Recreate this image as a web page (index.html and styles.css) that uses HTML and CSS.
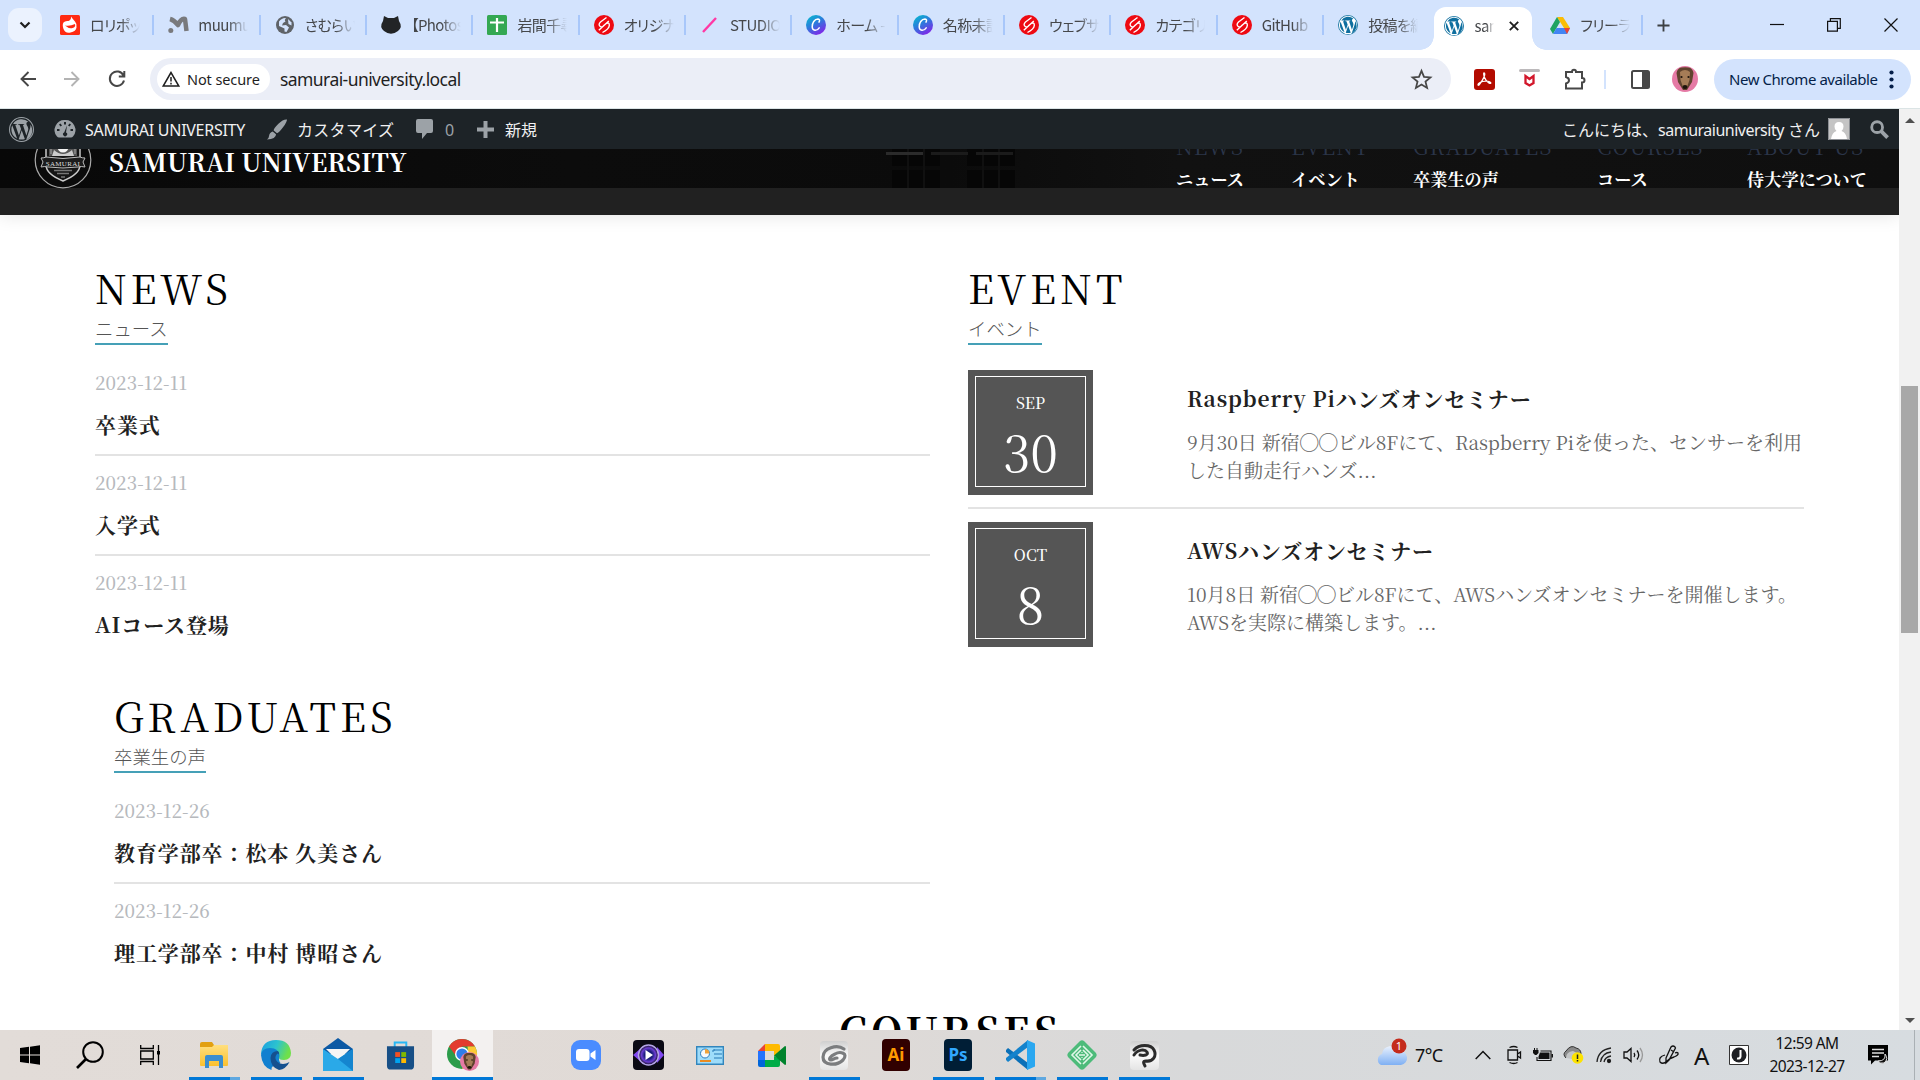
FILE: index.html
```html
<!DOCTYPE html>
<html lang="ja">
<head>
<meta charset="utf-8">
<title>SAMURAI UNIVERSITY</title>
<link rel="stylesheet" href="styles.css">
</head>
<body>
<svg class="defs" width="0" height="0">
  <defs>
    <linearGradient id="canvaGrad" x1="0" y1="0" x2=".6" y2="1"><stop offset="0" stop-color="#00c4cc"/><stop offset=".5" stop-color="#2a7ddc"/><stop offset="1" stop-color="#7d2ae8"/></linearGradient>
    <linearGradient id="edgeGrad" x1="0" y1="0" x2="1" y2=".3"><stop offset="0" stop-color="#1b9de2"/><stop offset=".55" stop-color="#2cc3cf"/><stop offset="1" stop-color="#6fe04a"/></linearGradient>
    <linearGradient id="cloudGrad" x1="0" y1="0" x2="0" y2="1"><stop offset="0" stop-color="#e9f1fd"/><stop offset="1" stop-color="#7fb0f3"/></linearGradient>
    <linearGradient id="silver" x1="0" y1="0" x2="0" y2="1"><stop offset="0" stop-color="#cfcfcf"/><stop offset=".5" stop-color="#fafafa"/><stop offset="1" stop-color="#e4e4e4"/></linearGradient>
    <linearGradient id="folder" x1="0" y1="0" x2="0" y2="1"><stop offset="0" stop-color="#ffdf7e"/><stop offset="1" stop-color="#fbc02f"/></linearGradient>
    <radialGradient id="playGrad"><stop offset=".4" stop-color="#1b1c7a"/><stop offset=".7" stop-color="#6c3ed2"/><stop offset="1" stop-color="#0a0812"/></radialGradient>
  </defs>
  <symbol id="sam" viewBox="0 0 20 20"><circle cx="10" cy="10" r="10" fill="#ee0a12"/><path d="M12.500 2.500 6.500 7Q4 9.500 6 11.200T9.500 10.800L12.500 8.300Q15.500 7 15.300 10.500T8.500 17.500M4.800 15.200 14.800 6" fill="none" stroke="#fff" stroke-width="1.400"/></symbol>
  <symbol id="canva" viewBox="0 0 20 20"><circle cx="10" cy="10" r="10" fill="url(#canvaGrad)"/><path d="M13 7.200q1.500-3-1-3.200C8.500 4 6 8 6.200 12s4.500 4.500 7 .8" fill="none" stroke="#fff" stroke-width="1.500" stroke-linecap="round"/></symbol>
  <symbol id="wp" viewBox="0 0 24 24"><path fill="currentColor" d="M12 0a12 12 0 1 0 0 24 12 12 0 0 0 0-24zm0 1a11 11 0 1 1 0 22 11 11 0 0 1 0-22zM2.300 12c0 3.800 2.200 7.100 5.500 8.700L3.100 8a9.600 9.600 0 0 0-.8 4zm16.200-.5c0-1.200-.4-2-.8-2.700-.5-.8-1-1.500-1-2.400 0-.9.700-1.800 1.700-1.800h.2A9.700 9.700 0 0 0 3.900 6.700h.6c1 0 2.600-.1 2.600-.1.500 0 .6.700 0 .8 0 0-.5.100-1.100.1l3.500 10.300 2.100-6.200-1.500-4.100-1-.1c-.5 0-.5-.8 0-.8 0 0 1.600.1 2.600.1s2.600-.1 2.600-.1c.5 0 .6.700.1.800l-1.100.1 3.400 10.200 1-3.100c.4-1.300.8-2.300.8-3.100zm-6.300 1.300-2.900 8.500c1.900.6 4.100.5 6-.1l-.1-.2-3-8.200zm8.300-5.500c.3 2.300-.3 4-1.100 6l-2.900 8.500A9.700 9.700 0 0 0 20.500 7.300z"/></symbol>
  <symbol id="dog" viewBox="0 0 26 26"><circle cx="13" cy="13" r="13" fill="#e57aa5"/><path d="M4.500 7q1-5 5-5.500t7 0q4 .5 5 5.500l-1.500 9-5 8h-4L6 16z" fill="#5f432e"/><path d="M8 6q5-4 10 0l-.5 8-2.500 7h-4l-2.500-7z" fill="#a57c57"/><circle cx="9.500" cy="11" r="1.100" fill="#1d130c"/><circle cx="16.500" cy="11" r="1.100" fill="#1d130c"/><ellipse cx="13" cy="21" rx="2.500" ry="2" fill="#1d130c"/></symbol>
</svg>

<div class="screen">
  <div class="tabstrip">
    <div class="tab-search"><svg width="12" height="8" viewBox="0 0 12 8"><path d="m1.500 1.500 4.500 4.500 4.500-4.500" fill="none" stroke="#1f1f1f" stroke-width="2.200"/></svg></div>
    <div class="tab tab-first"><svg class="fav" viewBox="0 0 20 20"><rect width="20" height="20" rx="1.500" fill="#ff2a12"/><path d="M11 1.500q2 3 4 5t1.500 6-6 5-7-3.500 0-6.500 5-1.500q3-1.500 2.500-4.500z" fill="#fff"/><path d="M5 10.500q5 1 10-1.500 1 3-2.500 4T5 10.500z" fill="#ff2a12"/></svg><span class="label">ロリポップ</span></div>
    <div class="tab"><svg class="fav" viewBox="0 0 20 20"><path d="M2 4q4 1 8 6 3-7 7-6l1.500 12" fill="none" stroke="#797a7d" stroke-width="4.500" stroke-linejoin="round"/><circle cx="2.800" cy="15.500" r="2.500" fill="#797a7d"/></svg><span class="label">muumuu</span></div>
    <div class="tab"><svg class="fav" viewBox="0 0 20 20"><circle cx="10" cy="10" r="9" fill="#5f6368"/><path d="M4 6.500Q7 2.500 11 3q-2 2-.5 3.500L8 8l-1 2.500 4-.5 3 2.500-2.500 4.500-2-.5v-3L4 11z" fill="#d3e3fd"/><path d="m13 4 3.500 3.500v3L13.500 9z" fill="#d3e3fd"/></svg><span class="label">さむらい大</span></div>
    <div class="tab"><svg class="fav" viewBox="0 0 20 20"><path d="M3 1l4 2h6l4-2 1 5q4 6-1 10-7 5.500-14 0-5-4-1-10z" fill="#222426"/></svg><span class="label">【Photosh</span></div>
    <div class="tab"><svg class="fav" viewBox="0 0 20 20"><rect width="20" height="20" rx="1.500" fill="#34a853"/><path d="M3 7.500h14M10 3v14" stroke="#fff" stroke-width="2.200"/></svg><span class="label">岩間千尋</span></div>
    <div class="tab"><svg class="fav"><use href="#sam"/></svg><span class="label">オリジナル</span></div>
    <div class="tab"><svg class="fav" viewBox="0 0 20 20"><path d="m3 17 13-14" stroke="#ff38a4" stroke-width="2.400"/></svg><span class="label">STUDIO</span></div>
    <div class="tab"><svg class="fav"><use href="#canva"/></svg><span class="label">ホーム -</span></div>
    <div class="tab"><svg class="fav"><use href="#canva"/></svg><span class="label">名称未設</span></div>
    <div class="tab"><svg class="fav"><use href="#sam"/></svg><span class="label">ウェブサイ</span></div>
    <div class="tab"><svg class="fav"><use href="#sam"/></svg><span class="label">カテゴリー</span></div>
    <div class="tab"><svg class="fav"><use href="#sam"/></svg><span class="label">GitHub</span></div>
    <div class="tab tab-plain"><svg class="fav wp-blue"><use href="#wp"/></svg><span class="label">投稿を編</span></div>
    <div class="tab tab-active"><svg class="fav wp-blue"><use href="#wp"/></svg><span class="label">sam</span><svg class="tab-x" viewBox="0 0 10 10"><path d="m.8.8 8.400 8.400M9.200.8.8 9.200" stroke="#1f1f1f" stroke-width="1.900"/></svg></div>
    <div class="tab"><svg class="fav" viewBox="0 0 20 20"><path d="M7 2h6l7 11h-6z" fill="#fbbc04"/><path d="M7 2 0 14l3 5 7-12z" fill="#1ea362"/><path d="M3 19h14l3-6H6.500z" fill="#4285f4"/><path d="m17 19 3-6h-6z" fill="#ea4335"/></svg><span class="label">フリーラン</span></div>
    <svg class="tab-new" viewBox="0 0 14 14"><path d="M7 .5v13M.5 7h13" stroke="#3c4043" stroke-width="2"/></svg>
    <div class="window-buttons">
      <svg width="14" height="14"><path d="M0 6.500h14" stroke="#111" stroke-width="1.200"/></svg>
      <svg width="14" height="14"><path d="M.6 3.400h9.800v9.800H.6zM3.400 3.400V.6h9.900v9.800h-2.900" fill="none" stroke="#111" stroke-width="1.200"/></svg>
      <svg width="14" height="14"><path d="m.5.5 13 13m0-13-13 13" stroke="#111" stroke-width="1.200"/></svg>
    </div>
  </div>

  <div class="toolbar">
    <div class="nav-buttons">
      <svg width="16" height="16"><path d="M16 8H1.800M8.500 1 1.500 8l7 7" fill="none" stroke="#474747" stroke-width="1.900"/></svg>
      <svg width="16" height="16"><path d="M0 8h14.200M7.500 1l7 7-7 7" fill="none" stroke="#b3b3b3" stroke-width="1.900"/></svg>
      <svg width="18" height="18"><path d="M15.500 5.500A7.200 7.200 0 1 0 16 10.500M16.300 1v5.500h-5.500" fill="none" stroke="#474747" stroke-width="2"/></svg>
    </div>
    <div class="omnibox">
      <div class="chip"><svg width="18" height="16" viewBox="0 0 18 16"><path d="M9 1.500 1.200 15h15.600zM9 6v4.500M9 11.800v1.700" fill="none" stroke="#1f1f1f" stroke-width="1.500"/></svg><span>Not secure</span></div>
      <span class="url">samurai-university.local</span>
      <svg class="star" viewBox="0 0 20 20"><path d="m10 1.800 2.400 5.700 6.100.5-4.700 4 1.500 6-5.300-3.300L4.700 18l1.500-6-4.700-4 6.100-.5z" fill="none" stroke="#474747" stroke-width="1.700"/></svg>
    </div>
    <div class="extensions">
      <svg width="21" height="21" viewBox="0 0 21 21"><rect width="21" height="21" rx="3" fill="#b30b00"/><path d="M10 4c2 0 0 6-5 12-1 1-2-1 1-2.500 3-1.500 9-2 10.500 0s-4 .5-6-5C9.600 6 9.500 4 10 4z" fill="none" stroke="#fff" stroke-width="1.300"/></svg>
      <svg width="21" height="21" viewBox="0 0 21 21"><rect width="21" height="3" rx="1.500" fill="#bcb9bb"/><path d="M6.500 7v7l4 2.500 4-2.500V7l-4 3z" fill="none" stroke="#d2172b" stroke-width="2.300"/></svg>
      <svg width="22" height="21" viewBox="0 0 22 21"><path d="M2 3h6q0-2.200 2-2.200T12 3h6v6q2.500 0 2.500 2.200T18 13.400V19.500H2v-5q3-1 3-3.300T2 8z" fill="none" stroke="#474747" stroke-width="2"/></svg>
      <i class="tool-sep"></i>
      <svg width="19" height="19"><rect x="1" y="1" width="17" height="17" rx="1.500" fill="none" stroke="#474747" stroke-width="2"/><path d="M11 1h7v17h-7z" fill="#474747"/></svg>
      <svg class="profile" width="26" height="26"><use href="#dog"/></svg>
    </div>
    <div class="update"><span>New Chrome available</span><svg width="5" height="19" fill="#041e49"><circle cx="2.500" cy="2.500" r="2.100"/><circle cx="2.500" cy="9.500" r="2.100"/><circle cx="2.500" cy="16.500" r="2.100"/></svg></div>
  </div>

  <div class="viewport">
    <div class="page">
      <div class="adminbar">
        <svg class="ab-wp" viewBox="0 0 24 24"><use href="#wp"/></svg>
        <svg class="ab-dash" viewBox="0 0 20 18"><path fill="currentColor" fill-rule="evenodd" d="M10 0a10 10 0 0 0-8 16.500q.8 1 2 1h12q1.200 0 2-1A10 10 0 0 0 10 0zM9 2h2v2.500H9zM4 4.500l1.500-1L7 5.500 5.500 6.500zM2 9h2.500v2H2zm13.500 0H18v2h-2.500zM12 5.500l-1 7a2 2 0 1 1-1.800 0zM14.500 3.500l1.500 1-1.500 2L13 5.500z"/></svg>
        <span class="ab-site">SAMURAI UNIVERSITY</span>
        <svg class="ab-brush" viewBox="0 0 22 22"><path fill="currentColor" d="M21.500.5q-4-.5-9 4.500t-5 7l3.500 3q2.500-1 6.500-6.500t4-8zM6.500 13l3.500 3q0 5-9.500 5.500 2-1 2.200-4t3.800-4.500z"/></svg>
        <span class="ab-custom">カスタマイズ</span>
        <svg class="ab-comment" viewBox="0 0 17 20"><path fill="currentColor" d="M2 0h13q2 0 2 2v10q0 2-2 2h-4l-5 6v-6H2q-2 0-2-2V2q0-2 2-2z"/></svg>
        <span class="ab-count">0</span>
        <svg class="ab-plus" viewBox="0 0 17 17"><path d="M8.500 0v17M0 8.500h17" stroke="currentColor" stroke-width="4"/></svg>
        <span class="ab-new">新規</span>
        <span class="ab-hello">こんにちは、<b>samuraiuniversity</b> さん</span>
        <svg class="ab-avatar" viewBox="0 0 22 22"><path d="M0 0h22v22H0z" fill="#c4c4c4"/><path d="M11 4q4.500 0 4.500 4.500 0 3-2 4.500 4.500 1.500 5.500 8H3q1-6.500 5.500-8-2-1.500-2-4.500Q6.500 4 11 4z" fill="#fff"/><path d="M.5.500h21v21H.5z" fill="none" stroke="#8c8f94"/></svg>
        <svg class="ab-search" viewBox="0 0 20 20"><circle cx="7.500" cy="7.500" r="5.700" fill="none" stroke="currentColor" stroke-width="3"/><path d="m12 12 6.500 6.500" stroke="currentColor" stroke-width="4"/></svg>
      </div>

      <header class="site-header">
        <div class="hero-edge">
          <svg class="windows" viewBox="0 0 160 39"><path d="M10 0h48v17H10zm0 21h48v18H10zm75-21h48v17H85zm0 21h48v18H85z" fill="#060606"/><path d="M26 0v39m16-39v39m59-39v39m16-39v39" stroke="#101010" stroke-width="2"/></svg>
          <div class="slides"><i class="on"></i><i></i><i></i></div>
        </div>
        <div class="header-row">
          <svg class="crest" viewBox="0 0 58 58"><circle cx="29" cy="29" r="27.800" fill="#0b0b0b" stroke="#aaa" stroke-width="1.200"/><path d="M12 6h34v28q0 9-17 16-17-7-17-16z" fill="#151515" stroke="#c9c9c9" stroke-width="1.500"/><path d="M15 7h28v18H15z" fill="#555"/><circle cx="29" cy="16" r="5.500" fill="#f4f4f4"/><path d="M20 19q9 8 18 0l2 6H18z" fill="#ccc"/><path d="M17 7v16m3-16v9m18-9v9m3-9v16" stroke="#aaa"/><path d="M7 27q3 0 5-1 17 3 34 0 2 1 5 1l-2 4 2 5q-4-1-7 0-15 2-30 0-3-1-7 0l2-5z" fill="#1c1c1c" stroke="#bbb"/><path d="M20 39.500h18M23 42.500h12M27 46h4" stroke="#777" stroke-width="1.300"/><text x="29" y="34.500" text-anchor="middle">SAMURAI</text></svg>
          <span class="brand">SAMURAI UNIVERSITY</span>
          <nav class="menu">
            <a class="m1"><em>NEWS</em>ニュース</a>
            <a class="m2"><em>EVENT</em>イベント</a>
            <a class="m3"><em>GRADUATES</em>卒業生の声</a>
            <a class="m4"><em>COURSES</em>コース</a>
            <a class="m5"><em>ABOUT US</em>侍大学について</a>
          </nav>
        </div>
      </header>

      <main class="columns">
        <div class="left">
          <section class="news">
            <h2>NEWS</h2>
            <div class="sub">ニュース</div>
            <article><time>2023-12-11</time><h3>卒業式</h3></article>
            <article><time>2023-12-11</time><h3>入学式</h3></article>
            <article><time>2023-12-11</time><h3>AIコース登場</h3></article>
          </section>
          <section class="news graduates">
            <h2>GRADUATES</h2>
            <div class="sub">卒業生の声</div>
            <article><time>2023-12-26</time><h3>教育学部卒：松本 久美さん</h3></article>
            <article><time>2023-12-26</time><h3>理工学部卒：中村 博昭さん</h3></article>
          </section>
        </div>
        <section class="events">
          <h2>EVENT</h2>
          <div class="sub">イベント</div>
          <article class="event">
            <div class="date"><div><small>SEP</small><strong>30</strong></div></div>
            <div class="info"><h3>Raspberry Piハンズオンセミナー</h3><p><span>9月30日 新宿◯◯ビル8Fにて、Raspberry Piを使った、センサーを利用</span><br><span>した自動走行ハンズ<b>…</b></span></p></div>
          </article>
          <article class="event">
            <div class="date"><div><small>OCT</small><strong>8</strong></div></div>
            <div class="info"><h3>AWSハンズオンセミナー</h3><p><span>10月8日 新宿◯◯ビル8Fにて、AWSハンズオンセミナーを開催します。</span><br><span>AWSを実際に構築します。<b>…</b></span></p></div>
          </article>
        </section>
      </main>
      <h2 class="courses">COURSES</h2>
    </div>
    <div class="scrollbar"><i class="up"></i><div class="thumb"></div><i class="down"></i></div>
  </div>

  <div class="taskbar">
    <div class="cell c-start"><svg width="20" height="20"><path d="M0 3 9 1.800V9.500H0zM10 1.700 20 .2v9.300H10zM0 10.500h9v7.700L0 17zM10 10.500h10v9.300L10 18.300z"/></svg></div>
    <div class="cell c-search"><svg width="28" height="28" fill="none" stroke="#000"><circle cx="17" cy="11" r="9.800" stroke-width="2"/><path d="m10 18-9 9" stroke-width="2.600"/></svg></div>
    <div class="cell c-view"><svg width="20" height="20" fill="none" stroke="#000" stroke-width="1.300"><path d="M.7 0v3.500h12.600V0M.7 6h12.600v8H.7zM.7 20v-3.500h12.600V20M18.500 0v20"/><path d="M18.500 6v3.500" stroke-width="3"/></svg></div>
    <div class="cell run two"><svg width="28" height="26" viewBox="0 0 28 26"><path d="M0 2q0-2 2-2h10l2 3v5H0z" fill="#e2a011"/><path d="M0 5h12l2-2h14v20q0 1-1 1H1q-1 0-1-1z" fill="url(#folder)"/><path d="M5 26V15q0-2 2-2h14q2 0 2 2v11h-4v-7H9v7z" fill="#3b8ed0"/></svg></div>
    <div class="cell run"><svg width="30" height="30" viewBox="0 0 30 30"><path d="M0 14Q1 0 15 0t15 13q0 7-7 7-6 0-5-3z" fill="url(#edgeGrad)"/><path d="M0 15Q1 8 9 8q9 0 9.500 8-1.500 4 1 7-10 2-9 7Q1 27 0 15z" fill="#1180d0"/><path d="M17 11q-7 0-7.500 7 0 9 8.500 12 7-1 10.500-8-7 4-12 0-4-4-.5-8 1.500-1.500 2 1 .500-2.500-1-4z" fill="#15508f"/></svg></div>
    <div class="cell run"><svg width="30" height="34" viewBox="0 0 30 34"><path d="M0 11 15 0l15 11v5H0z" fill="#0c59a4"/><path d="M3 11h24L15 23z" fill="#f5f5f5"/><path d="M0 11l15 10 15-10v22H0z" fill="#2aa9e8"/><path d="m15 21 15 12V11z" fill="#1585cf"/></svg></div>
    <div class="cell"><svg width="29" height="30" viewBox="0 0 30 30"><path d="M9 7V2h12v5" fill="none" stroke="#27b8f5" stroke-width="2"/><path d="M1 6h28v20q0 4-4 4H5q-4 0-4-4z" fill="#174f86"/><path d="M9.500 12h5v5h-5z" fill="#f25022"/><path d="M15.800 12h5v5h-5z" fill="#7fba00"/><path d="M9.500 18.300h5v5h-5z" fill="#00a4ef"/><path d="M15.800 18.300h5v5h-5z" fill="#ffb900"/></svg></div>
    <div class="cell run active"><svg width="32" height="32" viewBox="0 0 32 32"><circle cx="15" cy="15" r="15" fill="#2b9c4a"/><path d="M2 7.500A15 15 0 0 1 28 7.500H15L9 17z" fill="#e33b2e"/><path d="M28 7.500A15 15 0 0 1 15 30l6.500-12-1-10.500z" fill="#fcc934"/><circle cx="15" cy="15" r="7" fill="#fff"/><circle cx="15" cy="15" r="5.600" fill="#2f7de9"/><svg x="13" y="13" width="19" height="19"><use href="#dog"/></svg></svg></div>
    <div class="cell"></div>
    <div class="cell"><svg width="30" height="30"><rect width="30" height="30" rx="9" fill="#4a8cff"/><rect x="5" y="9" width="13.500" height="12" rx="3" fill="#fff"/><path d="m19.500 13.500 5-3.500v10l-5-3.500z" fill="#fff"/></svg></div>
    <div class="cell"><svg width="31" height="30"><rect width="31" height="30" rx="4" fill="#0b0a14"/><path d="m0 15 7-6v12zm31 0-7-8v16z" fill="#8048f0"/><circle cx="15.500" cy="15" r="10" fill="url(#playGrad)" stroke="#b5a5e8" stroke-width="1.500"/><path d="m12.500 10 7.500 5-7.500 5z" fill="#fff"/></svg></div>
    <div class="cell"><svg width="28" height="19"><path d="M.7.700h26.600v17.600H.7z" fill="#9edcfa" stroke="#3286bd" stroke-width="1.400"/><circle cx="9" cy="7.500" r="4.500" fill="#f7f9fb" stroke="#2a7dc1"/><path d="M9 7.500V3a4.500 4.500 0 0 1 4.500 4.500z" fill="#f1a33a"/><path d="M16 5h2V3m0 5h8m-8-4h8m-8 8h8" stroke="#2678b5" fill="none"/><path d="M4 15h11" stroke="#e98b22" stroke-width="2"/></svg></div>
    <div class="cell"><svg width="28" height="23" viewBox="0 0 28 23"><path d="M0 7 7 0v7z" fill="#ea4335"/><path d="M0 7h7v9H0z" fill="#2573fc"/><path d="M7 0h13q2 0 2 2v6l-6 4V7H7z" fill="#ffba00"/><path d="M0 16h7v7H2q-2 0-2-2z" fill="#0066da"/><path d="M7 16h9v-4l6 3v6q0 2-2 2H7z" fill="#00ac47"/><path d="M16 11.500 27 2q1 0 1 1v17q0 1-1 1z" fill="#00832d"/></svg></div>
    <div class="cell run"><svg width="28" height="29"><rect width="28" height="29" rx="4" fill="url(#silver)"/><path d="M24 8C17 3 3 7 3 16c0 9 14 9 20 3 6-7-3-9-8-6-5 2-7 6-4 6 2 0 3-2 6-2" fill="none" stroke="#7b7d7f" stroke-width="3.200" stroke-linecap="round"/></svg></div>
    <div class="cell"><div class="adobe ai">Ai</div></div>
    <div class="cell run"><div class="adobe ps">Ps</div></div>
    <div class="cell run two"><svg width="30" height="30" viewBox="0 0 30 30"><path d="m1 10 2-2L23 23v7L1 12z" fill="#0a70b8"/><path d="m1 20 2 2L23 7V0L1 18z" fill="#1382cc"/><path d="m22 0 8 3.500v23L22 30z" fill="#2aa7f0"/></svg></div>
    <div class="cell run"><svg width="30" height="30"><path d="M13 1q2-1.500 4 0l12 12q1.500 2 0 4L17 29q-2 1.500-4 0L1 17q-1.500-2 0-4z" fill="#4dbb7a"/><path d="M14 6 5 15l9 9M16 6l9 9-9 9M14 10l-5 5 5 5m2-10 5 5-5 5M12 15h6M15 12v.8m0 4.200v.8" fill="none" stroke="#e0f7e8" stroke-width="1.600"/></svg></div>
    <div class="cell run"><svg width="29" height="29"><rect width="29" height="29" rx="4" fill="url(#silver)"/><path d="M4 9C9 3 21 3 24 9s-1 12-8 11c-4 0-2 3-1 5M4 14c4-6 11-6 13-3s-3 4-7 3" fill="none" stroke="#2b2b2b" stroke-width="3" stroke-linecap="round"/></svg></div>

    <div class="tray">
      <svg class="weather" width="32" height="28" viewBox="0 0 32 28"><path d="M5 27a6 6 0 0 1 1-11 9 9 0 0 1 17-3 7 7 0 0 1 2 14z" fill="url(#cloudGrad)"/><circle cx="23" cy="8" r="7.500" fill="#c42b1c"/><text x="23" y="12" text-anchor="middle">1</text></svg>
      <span class="temp">7°C</span>
      <svg class="chev" width="16" height="10"><path d="m.7 9 7.300-7.500L15.300 9" fill="none" stroke="#111" stroke-width="1.500"/></svg>
      <svg class="cam" width="15" height="18"><path d="M2.500 1.500q4.500-2 8 0M2.500 16.500q4.500 2 8 0M1 4h9.500v10H1zM10.500 8l3-2v6l-3-2" fill="none" stroke="#111" stroke-width="1.300"/></svg>
      <svg class="bat" width="20" height="14"><path d="M7.500 3h10.500v9.500H4V9" fill="none" stroke="#111" stroke-width="1.100"/><path d="M7 4.500h9.500V11H5.500V8.500zM18.500 6H20v3.500h-1.500zM0 2h5.500v3l-2 2h-1.500l-2-2zM1 0h1v2H1zm2.500 0h1v2h-1z" fill="#111"/></svg>
      <svg class="od" width="21" height="18"><path d="M3 12Q-1 8 3 5q5-7 10-3 5 1 5 6" fill="#8a8a8a" stroke="#333"/><path d="M3 12q0-6 7-7l4 2-5 6z" fill="#c3c5c6"/><circle cx="14.500" cy="12" r="5.800" fill="#fde300"/><path d="M14.500 8.500v4.500m0 1v1.500" stroke="#222" stroke-width="1.500"/></svg>
      <svg class="wifi" width="16" height="16" fill="none" stroke="#222" stroke-width="1.300"><path d="M1 15Q2 3 15 1M4.500 15Q6 6 15 5M8 15q1-5 7-6"/><circle cx="13" cy="14" r="1.500" fill="#111"/></svg>
      <svg class="spk" width="21" height="16" fill="none" stroke="#111" stroke-width="1.300"><path d="M1 5h3l4-3.500v13L4 11H1zM11 6q1.500 2 0 4M14 3.500q3.500 4.500 0 9"/><path d="M17 1q5 7 0 14" stroke="#999"/></svg>
      <svg class="pen" width="20" height="20" fill="none" stroke="#111" stroke-width="1.300"><path d="m7 13 5-11q2-2 4 0 1 1 0 2l-6 11-3 3zM6 10q-7 2-5 7 3 3 7-1 3-3 7-4 5-2 4-4-1-1-3 0M12 5l3 2"/></svg>
      <span class="ime">A</span>
      <svg class="jic" width="20" height="20"><path d="M.5.500h19v19H.5z" fill="#fff" stroke="#333"/><circle cx="10" cy="10" r="7.500" fill="#1f2024"/><path d="M11.500 5v6.500Q11 14 8 13.500" fill="none" stroke="#fff" stroke-width="2"/></svg>
      <div class="clock"><span>12:59 AM</span><span>2023-12-27</span></div>
      <svg class="notif" width="21" height="20"><path d="M0 0h20v15.500H7L3 19.500v-4H0z"/><path d="M4 4.500h12M4 8h12M4 11.500h7" stroke="#ddd" stroke-width="1.400"/><path d="M17 9q4 5-1 9-4 1-6-2 8 0 7-7z" fill="#111" stroke="#ddd"/></svg>
      <i class="show-desktop"></i>
    </div>
  </div>
</div>
</body>
</html>
```
FILE: styles.css
```css
* { box-sizing: border-box; }
body { margin: 0; width: 1920px; height: 1080px; overflow: hidden; background: #fff; font-family: "Noto Sans", "Noto Sans CJK JP", sans-serif; }
svg { display: block; flex: none; overflow: visible; }
span { white-space: nowrap; }
h2, h3, p { margin: 0; }
em, b { font-style: normal; font-weight: 400; }
.defs { position: absolute; }
.screen { display: flex; flex-direction: column; width: 1920px; height: 1080px; }

/* tab strip */
.tabstrip { display: flex; height: 50px; background: #d3e3fd; padding-left: 8px; align-items: center; }
.tab-search { width: 34px; height: 34px; margin-right: 6px; border-radius: 11px; background: #ebf2fe; display: grid; place-items: center; }
.tab { width: 106.350px; height: 20px; display: flex; align-items: center; padding-left: 14px; border-right: 2px solid #a8c7fa; flex: none; }
.tab-first { padding-left: 12px; }
.tab-plain { border-color: transparent; }
.fav { width: 20px; height: 20px; margin-right: 10px; }
.wp-blue { color: #0f6f9f; background: #fff; border-radius: 50%; }
.label { width: 50px; overflow: hidden; font-family: "Noto Sans CJK JP", sans-serif; font-size: 15px; font-feature-settings: "palt"; line-height: 22px; letter-spacing: -.6px; color: #45474a; -webkit-mask-image: linear-gradient(90deg, #000 60%, transparent); mask-image: linear-gradient(90deg, #000 60%, transparent); }
.tab-active { height: 43px; align-self: flex-end; width: 98px; margin: 0 4px 0 4px; padding-left: 10px; padding-bottom: 6px; border: 0; border-radius: 12px 12px 0 0; background: #fff; position: relative; }
.tab-active::before, .tab-active::after { content: ""; position: absolute; bottom: 0; width: 14px; height: 14px; }
.tab-active::before { left: -14px; background: radial-gradient(circle at 0 0, transparent 13.500px, #fff 14px); }
.tab-active::after { right: -14px; background: radial-gradient(circle at 100% 0, transparent 13.500px, #fff 14px); }
.tab-active .label { width: 20px; }
.tab-x { width: 10px; height: 10px; margin-left: 15px; }
.tab-new { width: 13px; height: 13px; margin-left: 14px; }
.window-buttons { display: flex; gap: 43px; margin: 0 22px 0 auto; }

/* toolbar */
.toolbar { display: flex; align-items: center; height: 59px; background: #fff; border-bottom: 1px solid #dbe4e5; padding-right: 9px; }
.nav-buttons { display: flex; align-items: center; width: 150px; padding-left: 20px; gap: 28px; }
.omnibox { display: flex; align-items: center; width: 1301px; height: 42px; border-radius: 21px; background: #ebeef7; padding-left: 7px; }
.chip { display: flex; align-items: center; gap: 7px; width: 113px; height: 30px; border-radius: 15px; background: #fff; padding-left: 5px; font-size: 14.500px; letter-spacing: -.1px; color: #1f1f1f; }
.url { margin-left: 10px; font-size: 17.500px; letter-spacing: -.57px; color: #1f1f1f; }
.star { width: 21px; height: 21px; margin: 0 19px 0 auto; }
.extensions { display: flex; align-items: center; margin-left: 23px; gap: 23.800px; }
.tool-sep { width: 2px; height: 19px; background: #d3e3fd; margin: 0 1px 0 -5px; }
.profile { margin-left: -2px; }
.update { display: flex; align-items: center; justify-content: space-between; width: 197px; height: 41px; margin-left: auto; padding: 0 17px 0 15px; border-radius: 21px; background: #d3e3fd; font-size: 15px; letter-spacing: -.45px; color: #041e49; }

/* page frame */
.viewport { display: flex; height: 921px; overflow: hidden; flex: none; }
.page { width: 1899px; height: 921px; overflow: hidden; }
.scrollbar { width: 21px; background: #f1f1f1; display: flex; flex-direction: column; align-items: center; padding: 9px 0 7px; }
.thumb { width: 17px; height: 247px; margin-top: 263px; background: #a8a8a8; }
.up, .down { border: 5px solid transparent; height: 5px; width: 10px; }
.up { border-top: 0; border-bottom: 5px solid #505050; }
.down { margin-top: auto; border-bottom: 0; border-top: 5px solid #505050; }

/* admin bar */
.adminbar { display: flex; align-items: center; height: 40px; padding-left: 9px; background: #1d2327; color: #9ca2a7; font-size: 16px; line-height: 38px; }
.adminbar span { color: #f0f0f1; padding-top: 2px; }
.ab-wp { width: 25px; height: 25px; margin-right: 21px; }
.ab-dash { width: 20px; height: 18px; margin-right: 10px; }
.ab-site { width: 181px; letter-spacing: -.27px; }
.ab-brush { width: 22px; height: 21px; margin-right: 9px; }
.ab-custom { width: 119px; letter-spacing: .3px; }
.ab-comment { width: 17px; height: 20px; margin-right: 12px; }
.adminbar .ab-count { width: 32px; color: #9ca2a7; }
.ab-plus { width: 17px; height: 17px; margin-right: 11px; }
.ab-hello { margin-left: auto; }
.ab-hello b { letter-spacing: -.5px; }
.ab-avatar { width: 22px; height: 22px; margin: 0 20px 0 8px; }
.ab-search { width: 19px; height: 19px; margin-right: 10px; }

/* site header */
.site-header, h2, h3, .events p, time, .date { font-family: "Noto Serif CJK JP", "Noto Serif JP", "Liberation Serif", "Noto Sans CJK JP", serif; }
.site-header { height: 66px; background: #212121; box-shadow: 0 0 18px rgba(0,0,0,.12); display: grid; clip-path: inset(0 0 -20px 0); }
.hero-edge, .header-row { grid-area: 1 / 1; }
.hero-edge { height: 39px; background: linear-gradient(90deg, #080808, #0c0c0c 30%, #0b0b0b 50%, #111 62%, #0f0f0f); display: grid; }
.hero-edge > * { grid-area: 1 / 1; }
.windows { width: 160px; height: 39px; margin-left: 882px; }
.slides { display: flex; gap: 8px; padding: 3px 0 0 886px; z-index: 1; }
.slides i { width: 37px; height: 3px; background: #1b1b1b; }
.slides .on { background: #2b2b2b; }
.header-row { display: flex; height: 66px; z-index: 1; }
.crest { width: 58px; height: 58px; margin: -18px 0 0 34px; }
.crest text { font: 7px "Liberation Serif", serif; fill: #ddd; letter-spacing: .3px; }
.brand { margin-left: 17px; width: 1067px; font-size: 25px; font-weight: 700; line-height: 24px; color: #fff; }
.menu { display: flex; color: #fff; font-size: 17.200px; font-weight: 700; line-height: 24px; }
.menu a { flex: none; white-space: nowrap; margin-top: -16px; }
.menu em { display: block; height: 34px; line-height: 26px; font-size: 21px; color: #2b3549; letter-spacing: 1.100px; }
.m1 { width: 115px; }
.m2 { width: 122px; }
.m3 { width: 184px; }
.m4 { width: 150px; }

/* content */
.columns { display: flex; padding: 48px 95px 0; gap: 38px; height: 791px; }
.left { width: 835px; }
h2 { height: 50px; font-size: 40px; font-weight: 400; line-height: 47px; color: #000; letter-spacing: 4px; }
.sub { width: max-content; height: 32px; line-height: 31px; font-family: "Noto Sans CJK JP", sans-serif; font-weight: 300; font-size: 18.400px; color: #555; border-bottom: 2px solid #45a0b7; }
.news article { height: 100px; padding-top: 13px; border-bottom: 2px solid #e3e3e3; }
.news .sub { margin-bottom: 11px; }
.news article:last-child { border: 0; }
time { display: block; font-size: 18.400px; font-weight: 500; font-kerning: none; line-height: 26px; letter-spacing: .1px; color: #b6b9bd; }
h3 { font-size: 21px; font-weight: 700; letter-spacing: .9px; line-height: 30px; color: #212121; }
.news h3 { margin-top: 14px; }
.graduates { margin: 35px 0 0 19px; }
.events { width: 836px; }
.events .sub { margin-bottom: 25px; }
.events h3 { letter-spacing: .83px; }
.event { display: flex; height: 139px; border-bottom: 2px solid #e3e3e3; margin-bottom: 13px; }
.event:last-child { border: 0; }
.date { width: 125px; height: 125px; padding: 6px 7px; background: #555; color: #fff; flex: none; }
.date div { height: 111px; border: 1px solid #fff; text-align: center; }
.date small { display: block; margin-top: 14px; font-size: 15.500px; font-weight: 500; line-height: 22px; }
.date strong { display: block; margin-top: 8px; font-size: 49px; font-weight: 400; line-height: 60px; }
.info { margin-left: 94px; padding-top: 13px; }
.events p { margin-top: 15px; font-size: 19px; line-height: 28px; color: #666; }
.events p b { font-family: "Liberation Serif", serif; }
.courses { padding-left: 839px; font-weight: 700; }

/* taskbar */
.taskbar { display: flex; height: 50px; background: linear-gradient(90deg, #e2dcd8, #e0dad6 40%, #d8d9da 62%, #d7dce0); flex: none; }
.cell { width: 62px; height: 50px; display: flex; align-items: center; justify-content: center; flex: none; background-repeat: no-repeat; background-position: 6px 47px; background-size: 51px 3px; }
.c-start { width: 60px; }
.c-search { width: 60px; }
.c-view { width: 60px; margin-right: 3px; }
.run { background-image: linear-gradient(#0078d7, #0078d7); }
.two { background-image: linear-gradient(90deg, #0078d7 80%, #5fa8e0 80%); }
.active { background-color: #f3f1f0; width: 61px; margin-left: 1px; background-position: 0 47px; background-size: 61px 3px; }
.adobe { width: 28px; height: 32px; border-radius: 4px; font: 700 17px/31px "Noto Sans", sans-serif; text-align: center; }
.ai { background: #310000; color: #ff9a00; }
.ps { background: #001e36; color: #31a8ff; }
.tray { display: flex; align-items: center; margin-left: auto; color: #111; height: 50px; }
.weather { margin: -6px 7px 0 0; }
.weather text { font: 11px "Noto Sans", sans-serif; fill: #fff; }
.temp { width: 60px; font-size: 18px; letter-spacing: -.6px; }
.chev { margin-right: 16px; }
.cam { margin-right: 11px; }
.bat { margin-right: 10px; }
.od { margin-right: 12px; }
.wifi { margin-right: 11px; }
.spk { margin-right: 15px; }
.pen { margin-right: 15px; }
.ime { width: 35px; font-size: 24px; }
.jic { margin-right: 15px; }
.clock { width: 86px; display: flex; flex-direction: column; align-items: center; font-size: 15.500px; line-height: 23px; letter-spacing: -.6px; margin-right: 18px; }
.notif { margin-right: 25px; }
.show-desktop { width: 1px; height: 50px; background: #aab0b4; margin-right: 5px; }
```
